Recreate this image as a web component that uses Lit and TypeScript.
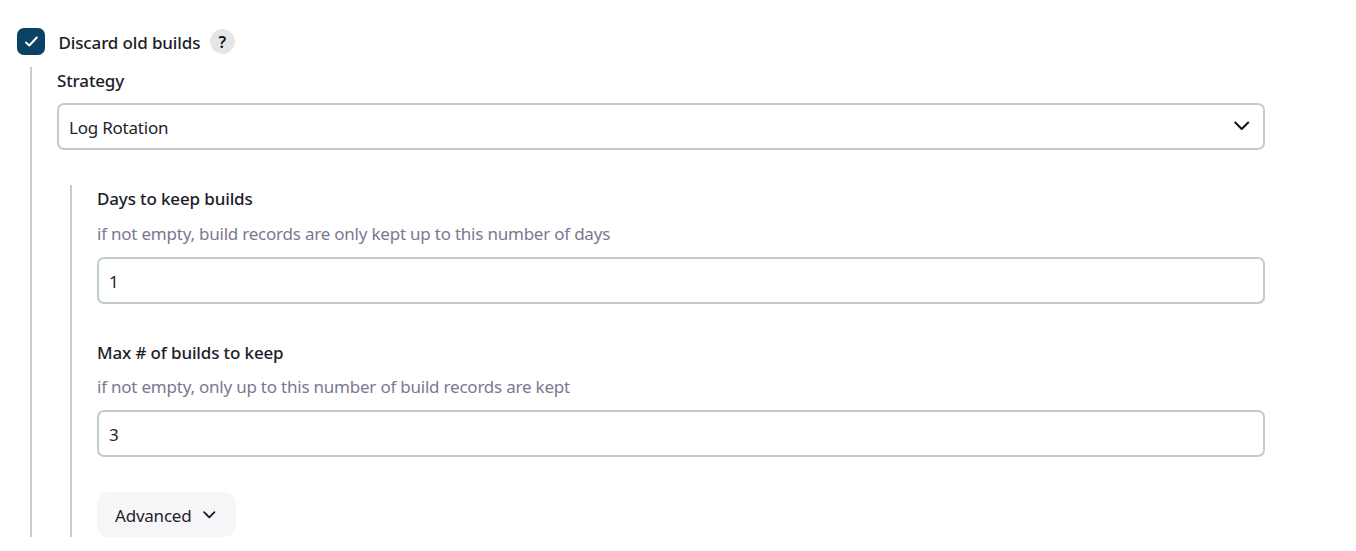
import { LitElement, html, css } from "lit";

class AppRoot extends LitElement {
  static styles = css`
    :host {
      display: block;
      box-sizing: border-box;
      height: 551px;
      overflow: hidden;
      background: #fff;
      padding: 28px 91px 14px 17px;
      font: 400 17px/24px "Noto Sans", "Open Sans", sans-serif;
      letter-spacing: -0.22px;
      color: #23232e;
    }
    .head {
      display: flex;
      align-items: center;
      height: 27px;
    }
    .check {
      width: 28px;
      height: 27px;
      border-radius: 7px;
      background: #0b4162;
    }
    .check svg,
    .chev {
      display: block;
    }
    .label {
      font-weight: 500;
      letter-spacing: -0.14px;
      white-space: nowrap;
      color: #1c1c27;
    }
    .head .label {
      margin: 2px 0 0 13.5px;
    }
    .help {
      width: 25px;
      height: 25px;
      margin-left: 9.5px;
      border-radius: 50%;
      background: #e6e6e6;
      text-align: center;
      font-size: 16.5px;
      line-height: 25px;
      font-weight: 600;
      letter-spacing: 0;
      color: #14141f;
    }
    .group {
      border-left: 2px solid #c3cdd2;
      box-sizing: border-box;
    }
    .outer {
      margin: 12px 0 0 13px;
      padding: 2px 0 0 25px;
      height: 470px;
    }
    .inner {
      margin: 35px 0 0 13px;
      padding: 2px 0 0 25px;
      height: 352px;
    }
    .field {
      display: flex;
      align-items: center;
      justify-content: space-between;
      box-sizing: border-box;
      height: 47px;
      padding: 2px 13px 0 10px;
      border: 2px solid #c0ccd0;
      border-radius: 7px;
      background: #fff;
    }
    .select {
      margin-top: 10px;
    }
    .select .chev {
      margin-top: -3px;
    }
    .hint {
      color: #7b7891;
      margin: 11px 0 11px;
      white-space: nowrap;
    }
    .entry + .entry {
      margin-top: 37px;
    }
    .entry + .entry .hint {
      margin: 10px 0 11px;
    }
    .button {
      display: flex;
      align-items: center;
      box-sizing: border-box;
      width: 139px;
      height: 45px;
      margin-top: 35px;
      padding: 2px 0 0 18px;
      border-radius: 12px;
      background: #f6f6f9;
    }
    .button .chev {
      margin: -2px 0 0 12px;
    }
  `;

  private chevron(w: number, h: number, sw: number) {
    return html`<svg class="chev" width=${w} height=${h} viewBox="0 0 16 10" fill="none" stroke="#14141f" stroke-width=${sw} stroke-linecap="round" stroke-linejoin="round"><path d="M1.300 1.500 7.700 8l6.500-6.500" /></svg>`;
  }

  private entry(label: string, hint: string, value: string) {
    return html`<div class="entry">
      <div class="label">${label}</div>
      <div class="hint">${hint}</div>
      <div class="field">${value}</div>
    </div>`;
  }

  render() {
    return html`
      <div class="head">
        <div class="check">
          <svg width="28" height="27" fill="none" stroke="#fff" stroke-width="2" stroke-linecap="round" stroke-linejoin="round"><path d="M9 14.500 12.300 17.500 19.800 9.500" /></svg>
        </div>
        <div class="label">Discard old builds</div>
        <div class="help">?</div>
      </div>
      <div class="group outer">
        <div class="label">Strategy</div>
        <div class="field select"><span>Log Rotation</span>${this.chevron(16, 10, 2)}</div>
        <div class="group inner">
          ${this.entry("Days to keep builds", "if not empty, build records are only kept up to this number of days", "1")}
          ${this.entry("Max # of builds to keep", "if not empty, only up to this number of build records are kept", "3")}
          <div class="button"><span>Advanced</span>${this.chevron(13, 8, 2.2)}</div>
        </div>
      </div>
    `;
  }
}

customElements.define("app-root", AppRoot);
